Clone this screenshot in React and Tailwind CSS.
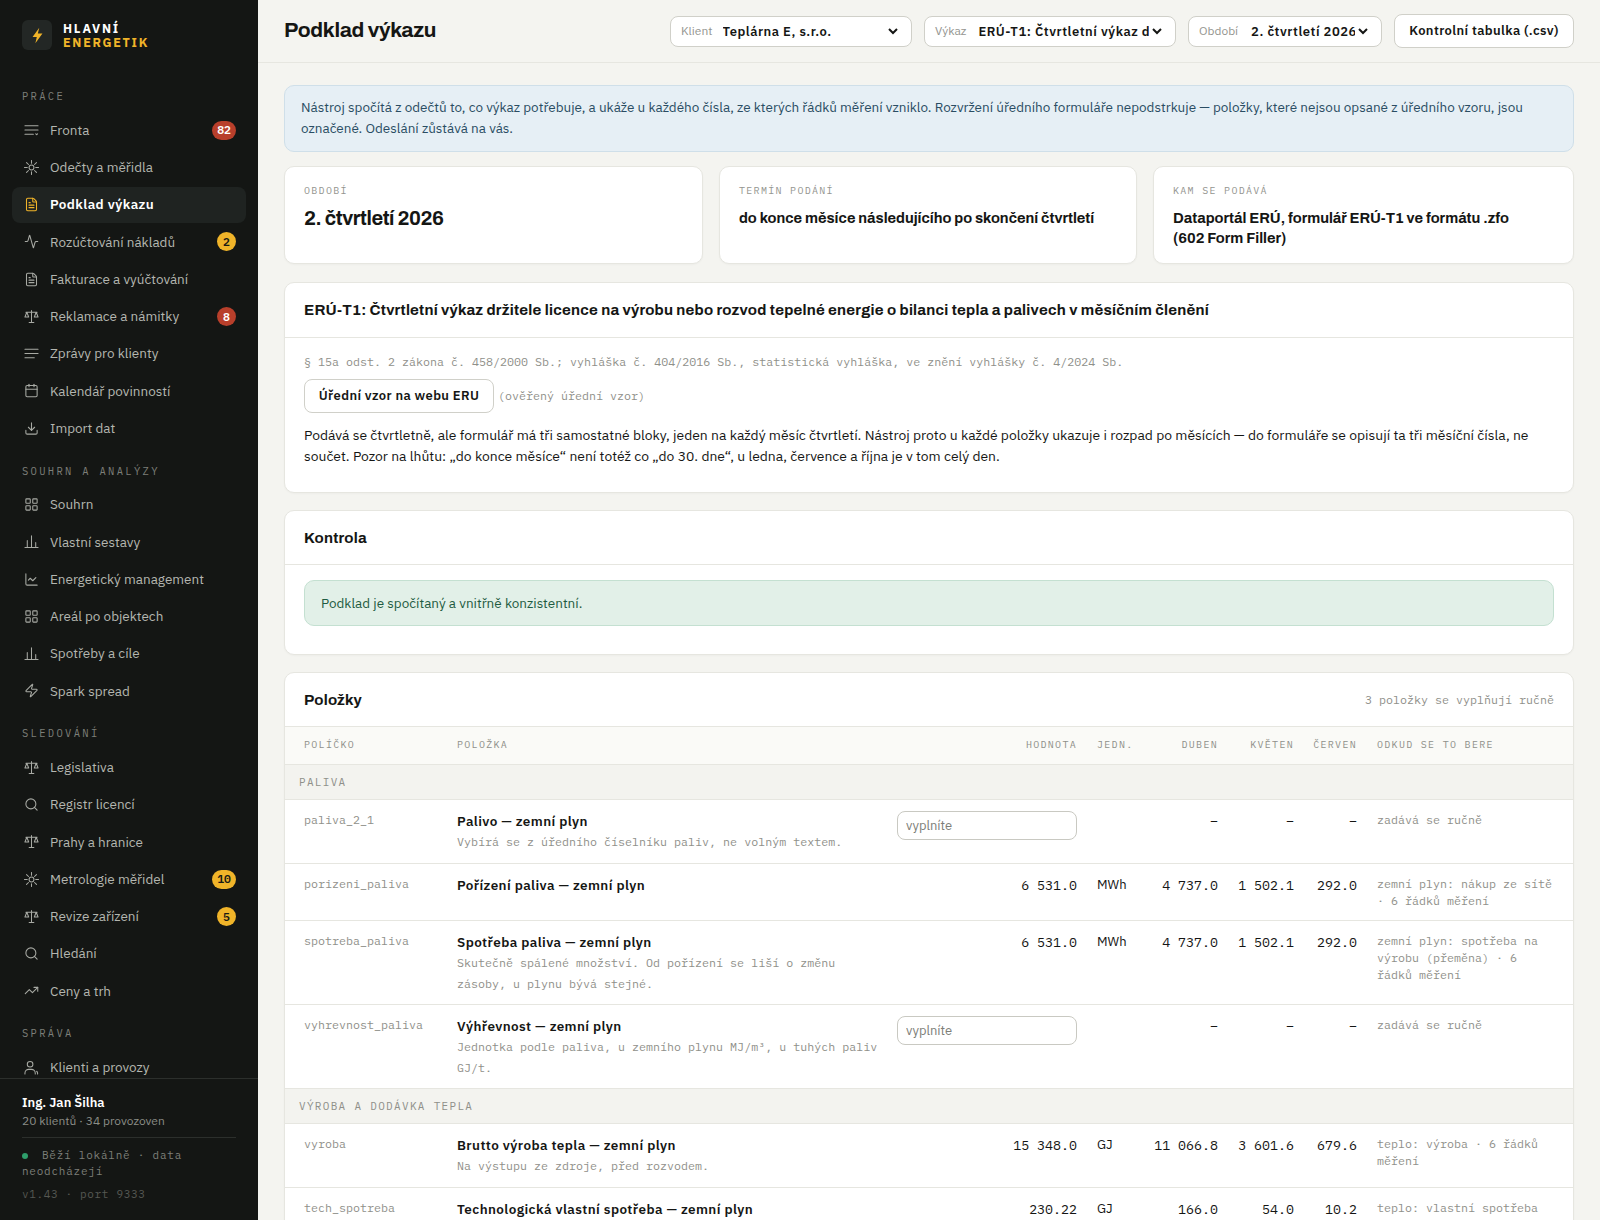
import {
  Activity,
  Calendar,
  ChartLine,
  Download,
  FileText,
  LayoutGrid,
  Search,
  TrendingUp,
  Zap,
} from "lucide-react";

const SANS = "font-['IBM_Plex_Sans','Roboto','Noto_Sans',sans-serif]";
const HEAD = "font-['Archivo','Liberation_Sans',sans-serif]";
const MONO = "font-['IBM_Plex_Mono','Liberation_Mono',monospace]";

// drawn by hand, lucide has no exact match for these
const QueueIcon = (props) => (
  <svg viewBox="0 0 16 16" fill="none" stroke="currentColor" strokeLinecap="round" strokeLinejoin="round" {...props} strokeWidth="1.1">
    <path d="M1 3h14M1 7.5h14M1 12h9M12.5 11.5l1 1 1-1" />
  </svg>
);
const LinesIcon = (props) => (
  <svg viewBox="0 0 16 16" fill="none" stroke="currentColor" strokeLinecap="round" {...props} strokeWidth="1.1">
    <path d="M1 3.5h14M1 8h14M1 12.5h10" />
  </svg>
);
const BarsIcon = (props) => (
  <svg viewBox="0 0 16 16" fill="none" stroke="currentColor" strokeLinecap="round" {...props} strokeWidth="1.1">
    <path d="M1 14.5h14M3.5 14V7M8 14V2M12.5 14V9" />
  </svg>
);
const PeopleIcon = (props) => (
  <svg viewBox="0 0 16 16" fill="none" stroke="currentColor" strokeLinecap="round" {...props} strokeWidth="1.1">
    <circle cx="6.5" cy="4.5" r="3" />
    <path d="M1 15v-1a4 4 0 0 1 4-4h3a4 4 0 0 1 4 4v1M14.5 15v-1a3 3 0 0 0-1-2" />
  </svg>
);
const SunIcon = (props) => (
  <svg viewBox="0 0 16 16" fill="none" stroke="currentColor" strokeLinecap="round" {...props} strokeWidth="1.1">
    <circle cx="8" cy="8" r="2.6" />
    <path d="M8 .5v3M8 12.5v3M.5 8h3M12.5 8h3M2.7 2.7l2.1 2.1M11.2 11.2l2.1 2.1M2.7 13.3l2.1-2.1M11.2 4.8l2.1-2.1" />
  </svg>
);
const ScaleIcon = (props) => (
  <svg viewBox="0 0 16 16" fill="none" stroke="currentColor" strokeLinecap="round" strokeLinejoin="round" {...props} strokeWidth="1.1">
    <path d="M8 1.5v13M5.5 14.5h5M2 3.5h12M1 8.5l2-5 2 5zM11 8.5l2-5 2 5z" />
  </svg>
);

const groups = [
  {
    title: "PRÁCE",
    items: [
      { label: "Fronta", icon: QueueIcon, badge: "82", tone: "red" },
      { label: "Odečty a měřidla", icon: SunIcon },
      { label: "Podklad výkazu", icon: FileText, active: true },
      { label: "Rozúčtování nákladů", icon: Activity, badge: "2", tone: "amber" },
      { label: "Fakturace a vyúčtování", icon: FileText },
      { label: "Reklamace a námitky", icon: ScaleIcon, badge: "8", tone: "red" },
      { label: "Zprávy pro klienty", icon: LinesIcon },
      { label: "Kalendář povinností", icon: Calendar },
      { label: "Import dat", icon: Download },
    ],
  },
  {
    title: "SOUHRN A ANALÝZY",
    items: [
      { label: "Souhrn", icon: LayoutGrid },
      { label: "Vlastní sestavy", icon: BarsIcon },
      { label: "Energetický management", icon: ChartLine },
      { label: "Areál po objektech", icon: LayoutGrid },
      { label: "Spotřeby a cíle", icon: BarsIcon },
      { label: "Spark spread", icon: Zap },
    ],
  },
  {
    title: "SLEDOVÁNÍ",
    items: [
      { label: "Legislativa", icon: ScaleIcon },
      { label: "Registr licencí", icon: Search },
      { label: "Prahy a hranice", icon: ScaleIcon },
      { label: "Metrologie měřidel", icon: SunIcon, badge: "10", tone: "amber" },
      { label: "Revize zařízení", icon: ScaleIcon, badge: "5", tone: "amber" },
      { label: "Hledání", icon: Search },
      { label: "Ceny a trh", icon: TrendingUp },
    ],
  },
  {
    title: "SPRÁVA",
    items: [{ label: "Klienti a provozy", icon: PeopleIcon }],
  },
];

const rows = [
  { group: "PALIVA" },
  {
    code: "paliva_2_1",
    name: "Palivo — zemní plyn",
    desc: "Vybírá se z úředního číselníku paliv, ne volným textem.",
    input: true,
    months: ["–", "–", "–"],
    source: "zadává se ručně",
  },
  {
    code: "porizeni_paliva",
    name: "Pořízení paliva — zemní plyn",
    value: "6 531.0",
    unit: "MWh",
    months: ["4 737.0", "1 502.1", "292.0"],
    source: "zemní plyn: nákup ze sítě · 6 řádků měření",
  },
  {
    code: "spotreba_paliva",
    name: "Spotřeba paliva — zemní plyn",
    desc: "Skutečně spálené množství. Od pořízení se liší o změnu zásoby, u plynu bývá stejné.",
    value: "6 531.0",
    unit: "MWh",
    months: ["4 737.0", "1 502.1", "292.0"],
    source: "zemní plyn: spotřeba na výrobu (přeměna) · 6 řádků měření",
  },
  {
    code: "vyhrevnost_paliva",
    name: "Výhřevnost — zemní plyn",
    desc: "Jednotka podle paliva, u zemního plynu MJ/m³, u tuhých paliv GJ/t.",
    input: true,
    months: ["–", "–", "–"],
    source: "zadává se ručně",
  },
  { group: "VÝROBA A DODÁVKA TEPLA" },
  {
    code: "vyroba",
    name: "Brutto výroba tepla — zemní plyn",
    desc: "Na výstupu ze zdroje, před rozvodem.",
    value: "15 348.0",
    unit: "GJ",
    months: ["11 066.8", "3 601.6", "679.6"],
    source: "teplo: výroba · 6 řádků měření",
  },
  {
    code: "tech_spotreba",
    name: "Technologická vlastní spotřeba — zemní plyn",
    value: "230.22",
    unit: "GJ",
    months: ["166.0", "54.0", "10.2"],
    source: "teplo: vlastní spotřeba",
  },
];

const NavItem = ({ item }) => {
  const Icon = item.icon;
  return (
    <div
      className={`flex h-9 items-center rounded-lg pl-3 pr-2.5 text-[13.5px] ${
        item.active ? "bg-[#1f2321] font-semibold tracking-[0.03em] text-white" : "text-[#b4b6b0]"
      }`}
    >
      <Icon
        strokeWidth={1.7}
        className={`h-[15px] w-[15px] shrink-0 ${item.active ? "text-[#f0b429]" : "text-[#a8aaa4]"}`}
      />
      <span className="ml-[11px] flex-1 whitespace-nowrap">{item.label}</span>
      {item.badge && (
        <span
          className={`flex h-[19px] min-w-[19px] items-center justify-center rounded-full px-[5px] text-[11.5px] font-semibold ${MONO} ${
            item.tone === "red" ? "bg-[#b83f2b] text-white" : "bg-[#f0b429] text-[#1a1a14]"
          }`}
        >
          {item.badge}
        </span>
      )}
    </div>
  );
};

const Sidebar = () => (
  <aside className="flex h-screen w-[258px] shrink-0 flex-col bg-[#141614]">
    <div className="flex items-center gap-[11px] pl-[22px] pt-5">
      <div className="flex h-[30px] w-[30px] items-center justify-center rounded-md bg-[#232725]">
        <svg viewBox="0 0 24 24" className="h-[17px] w-[17px] text-[#f0b429]" fill="currentColor">
          <path d="M14.5 1 5 14h6l-2 9 10-14h-6.5z" />
        </svg>
      </div>
      <div className="pb-[1px] text-[12.5px] font-bold leading-[14px] tracking-[0.14em]">
        <div className="text-white">HLAVNÍ</div>
        <div className="text-[#f0b429]">ENERGETIK</div>
      </div>
    </div>
    <nav className="flex-1 overflow-hidden px-3 pt-[39px]">
      {groups.map((group) => (
        <div key={group.title} className="mb-[17.5px]">
          <div className={`mb-[9px] pl-2.5 text-[10.5px] leading-[14px] tracking-[0.22em] text-[#7d7f79] ${MONO}`}>
            {group.title}
          </div>
          <div className="flex flex-col gap-[1.25px]">
            {group.items.map((item) => (
              <NavItem key={item.label} item={item} />
            ))}
          </div>
        </div>
      ))}
    </nav>
    <div className="border-t border-[#2c2f2c] px-[22px] pb-[18px] pt-[15px]">
      <div className="text-[13px] font-semibold leading-[18px] text-white">Ing. Jan Šilha</div>
      <div className="text-[12px] leading-[17px] text-[#8b8d87]">20 klientů · 34 provozoven</div>
      <div className="mt-2 border-t border-[#2c2f2c] pt-[9px]">
        <div className={`text-[11px] leading-[16px] tracking-[0.07em] text-[#7d7f79] ${MONO}`}>
          <span className="mr-[14px] inline-block h-1.5 w-1.5 rounded-full bg-[#2e9e6b] align-middle" />
          Běží lokálně · data neodcházejí
        </div>
        <div className={`mt-[7px] text-[11px] leading-[16px] tracking-[0.06em] text-[#565853] ${MONO}`}>
          v1.43 · port 9333
        </div>
      </div>
    </div>
  </aside>
);

const Picker = ({ label, value, className, labelClass }) => (
  <label className={`flex h-[31px] items-center rounded-lg border border-[#d0d0c9] bg-white pl-2.5 pr-2.5 ${className}`}>
    <span className={`text-[12px] text-[#94958f] ${labelClass}`}>{label}</span>
    <select className="min-w-0 flex-1 bg-transparent text-[13px] font-semibold tracking-[0.04em] text-[#151614] outline-none">
      <option>{value}</option>
    </select>
  </label>
);

const Card = ({ label, children }) => (
  <div className="h-[98px] rounded-[10px] border border-[#e6e6e0] bg-white px-[19px] pt-[17px] shadow-[0_1px_2px_rgba(0,0,0,0.03)]">
    <div className={`text-[10px] leading-[14px] tracking-[0.13em] text-[#94958f] ${MONO}`}>{label}</div>
    {children}
  </div>
);

const Section = ({ className, children }) => (
  <section className={`rounded-[10px] border border-[#e6e6e0] bg-white shadow-[0_1px_2px_rgba(0,0,0,0.03)] ${className}`}>
    {children}
  </section>
);

const th = `pb-[2px] text-[10px] font-normal tracking-[0.13em] text-[#8f908a] ${MONO}`;
const mono = `text-[11.68px] text-[#8f908a] ${MONO}`;
const num = `pt-[11px] pr-2.5 text-right align-top whitespace-nowrap text-[13.3px] leading-[20px] text-[#151614] ${MONO}`;

const ItemsTable = () => (
  <table className="w-full table-fixed border-collapse">
    <colgroup>
      <col className="w-[162px]" />
      <col className="w-[440px]" />
      <col className="w-[200px]" />
      <col className="w-[60px]" />
      <col className="w-[81px]" />
      <col className="w-[76px]" />
      <col className="w-[63px]" />
      <col />
    </colgroup>
    <thead>
      <tr className="h-[37px] border-b border-[#e6e6e0] bg-[#fafaf7]">
        <th className={`${th} pl-[19px] text-left`}>POLÍČKO</th>
        <th className={`${th} pl-2.5 text-left`}>POLOŽKA</th>
        <th className={`${th} pr-2.5 text-right`}>HODNOTA</th>
        <th className={`${th} pl-2.5 text-left`}>JEDN.</th>
        <th className={`${th} pr-2.5 text-right`}>DUBEN</th>
        <th className={`${th} pr-2.5 text-right`}>KVĚTEN</th>
        <th className={`${th} pr-2.5 text-right`}>ČERVEN</th>
        <th className={`${th} pl-2.5 text-left`}>ODKUD SE TO BERE</th>
      </tr>
    </thead>
    <tbody>
      {rows.map((row) =>
        row.group ? (
          <tr key={row.group} className="h-[35px] border-b border-[#e6e6e0] bg-[#f3f3ef]">
            <td colSpan={8} className={`pl-[14px] pt-[1px] text-[11px] tracking-[0.12em] text-[#8f908a] ${MONO}`}>
              {row.group}
            </td>
          </tr>
        ) : (
          <tr key={row.code} className={`border-b border-[#e6e6e0] ${row.desc ? "h-[64px]" : ""}`}>
            <td className={`${mono} pl-[19px] pt-[11px] align-top leading-[17px]`}>{row.code}</td>
            <td className="pb-[10px] pl-2.5 pr-1 pt-[11px] align-top">
              <div className="text-[13.5px] font-semibold leading-[20px] tracking-[0.03em] text-[#151614]">{row.name}</div>
              {row.desc && <div className={`${mono} leading-[21px]`}>{row.desc}</div>}
            </td>
            {row.input ? (
              <td className="px-2.5 pt-[11px] align-top">
                <input
                  placeholder="vyplníte"
                  className="h-[29px] w-full rounded-lg border border-[#c9c9c2] bg-white px-2 text-[13px] placeholder:text-[#7d7e78]"
                />
              </td>
            ) : (
              <td className={num}>{row.value}</td>
            )}
            <td className="pl-2.5 pt-[11px] align-top text-[13px] leading-[20px] text-[#151614]">{row.unit}</td>
            {row.months.map((m, i) => (
              <td key={i} className={num}>
                {m}
              </td>
            ))}
            <td className={`${mono} pb-[11px] pl-2.5 pr-5 pt-[11px] align-top leading-[17px]`}>{row.source}</td>
          </tr>
        )
      )}
    </tbody>
  </table>
);

const App = () => (
  <div className={`flex h-screen overflow-hidden bg-[#f4f4f0] ${SANS}`}>
    <Sidebar />
    <main className="min-w-0 flex-1 overflow-hidden">
      <header className="flex h-[63px] items-center border-b border-[#e6e6e0] pl-[26px] pr-[26px]">
        <h1 className={`mr-auto text-[21px] font-bold tracking-[-0.015em] text-[#151614] ${HEAD}`}>Podklad výkazu</h1>
        <Picker label="Klient" labelClass="mr-[6px]" value="Teplárna E, s.r.o." className="mr-3 w-[242px]" />
        <Picker label="Výkaz" labelClass="mr-[8px]" value="ERÚ-T1: Čtvrtletní výkaz držitele licence" className="mr-3 w-[252px]" />
        <Picker label="Období" labelClass="mr-[9px]" value="2. čtvrtletí 2026" className="mr-3 w-[194px]" />
        <button className="h-[34px] w-[180px] rounded-lg border border-[#d0d0c9] bg-white text-[13px] font-semibold tracking-[0.03em] text-[#151614]">
          Kontrolní tabulka (.csv)
        </button>
      </header>
      <div className="px-[26px] pt-[22px]">
        <div className="rounded-[10px] border border-[#cfdfe9] bg-[#e6eff5] px-4 pb-[12px] pt-[11px] text-[13.5px] leading-[21px] text-[#2a4d63]">
          Nástroj spočítá z odečtů to, co výkaz potřebuje, a ukáže u každého čísla, ze kterých řádků měření vzniklo.
          Rozvržení úředního formuláře nepodstrkuje — položky, které nejsou opsané z úředního vzoru, jsou označené.
          Odeslání zůstává na vás.
        </div>
        <div className="mt-[14px] grid grid-cols-[419px_418px_1fr] gap-4">
          <Card label="OBDOBÍ">
            <div className={`mt-[6px] text-[20px] font-bold leading-[28px] tracking-[-0.02em] text-[#151614] ${HEAD}`}>
              2. čtvrtletí 2026
            </div>
          </Card>
          <Card label="TERMÍN PODÁNÍ">
            <div className={`mt-[10px] text-[14.6px] font-bold leading-[20px] text-[#151614] ${HEAD}`}>
              do konce měsíce následujícího po skončení čtvrtletí
            </div>
          </Card>
          <Card label="KAM SE PODÁVÁ">
            <div className={`mt-[10px] max-w-[350px] text-[14.6px] font-bold leading-[20px] text-[#151614] ${HEAD}`}>
              Dataportál ERÚ, formulář ERÚ-T1 ve formátu .zfo (602 Form Filler)
            </div>
          </Card>
        </div>
        <Section className="mt-[18px] h-[211px]">
          <div className={`flex h-[55px] items-center border-b border-[#e6e6e0] px-[19px] text-[15px] font-bold tracking-[0.015em] text-[#151614] ${HEAD}`}>
            ERÚ-T1: Čtvrtletní výkaz držitele licence na výrobu nebo rozvod tepelné energie o bilanci tepla a palivech v měsíčním členění
          </div>
          <div className="px-[19px] pt-[16px]">
            <div className={`text-[11.68px] leading-[16px] text-[#8f908a] ${MONO}`}>
              § 15a odst. 2 zákona č. 458/2000 Sb.; vyhláška č. 404/2016 Sb., statistická vyhláška, ve znění vyhlášky č. 4/2024 Sb.
            </div>
            <div className="mt-[9px] flex items-center">
              <button className="h-[34px] w-[190px] rounded-lg border border-[#d0d0c9] bg-white text-[13px] font-semibold tracking-[0.03em] text-[#151614]">
                Úřední vzor na webu ERU
              </button>
              <span className={`ml-1 text-[11.68px] text-[#8f908a] ${MONO}`}>(ověřený úřední vzor)</span>
            </div>
            <p className="mt-[12px] text-[13.9px] leading-[21px] text-[#151614]">
              Podává se čtvrtletně, ale formulář má tři samostatné bloky, jeden na každý měsíc čtvrtletí. Nástroj proto u každé položky ukazuje i rozpad po měsících — do formuláře se opisují ta tři měsíční čísla, ne součet. Pozor na lhůtu: „do konce měsíce“ není totéž co „do 30. dne“, u ledna, července a října je v tom celý den.
            </p>
          </div>
        </Section>
        <Section className="mt-[17px] h-[145px]">
          <div className={`flex h-[54px] items-center border-b border-[#e6e6e0] px-[19px] pt-[1px] text-[15px] font-bold tracking-[0.015em] text-[#151614] ${HEAD}`}>
            Kontrola
          </div>
          <div className="mx-[19px] mt-[15px] rounded-[10px] border border-[#c4e0d1] bg-[#e2f0e8] px-4 py-3 text-[13.5px] leading-[20px] text-[#1f5c42]">
            Podklad je spočítaný a vnitřně konzistentní.
          </div>
        </Section>
        <Section className="mt-[17px] overflow-hidden">
          <div className="flex h-[54px] items-center justify-between border-b border-[#e6e6e0] px-[19px] pt-[1px]">
            <span className={`text-[15px] font-bold tracking-[0.015em] text-[#151614] ${HEAD}`}>Položky</span>
            <span className={mono}>3 položky se vyplňují ručně</span>
          </div>
          <ItemsTable />
        </Section>
      </div>
    </main>
  </div>
);

export default App;
